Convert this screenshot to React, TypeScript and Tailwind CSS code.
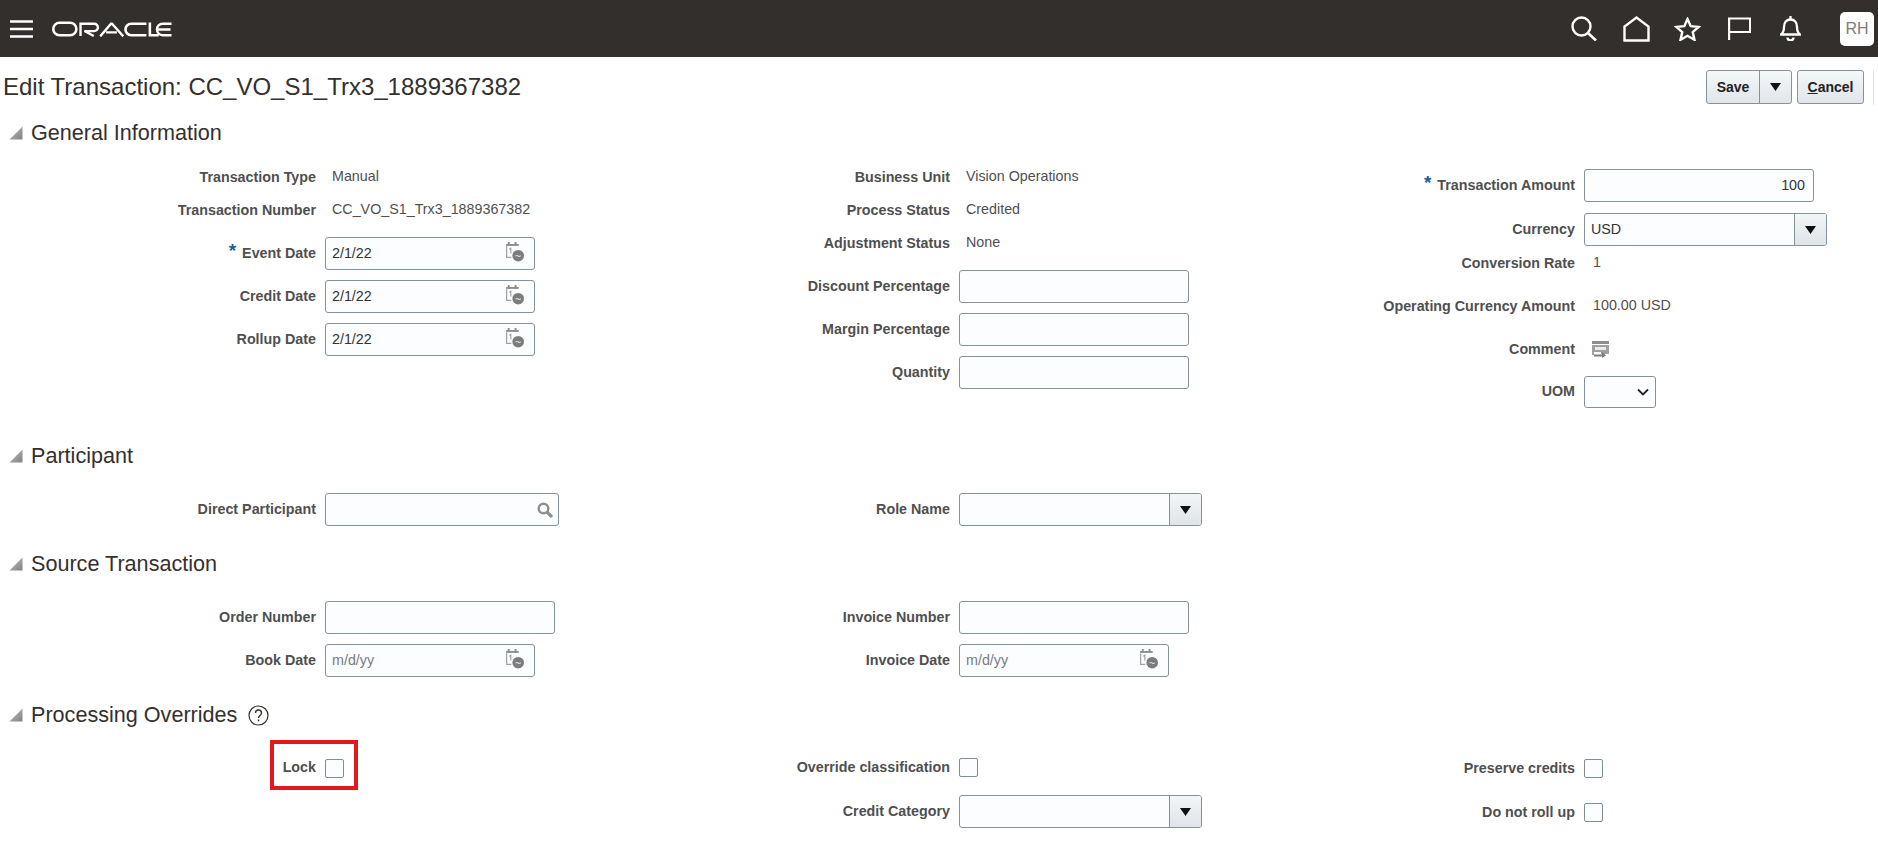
import React from 'react';

const font = "font-['Liberation_Sans',Arial,sans-serif]";

function CalendarIcon() {
  return (
    <svg width="19" height="20" viewBox="0 0 18 19" className="shrink-0 -mt-[3px]">
      <path d="M3.500 0v3.500M10 0v3.500" stroke="#8a8a8a" strokeWidth="1.800" />
      <path d="M1 2.800h12" stroke="#8f8f8f" strokeWidth="1.800" />
      <path d="M1.500 4v10.500H6" fill="none" stroke="#a3a3a3" strokeWidth="1.200" />
      <path d="M4 7l1.500-1v5" fill="none" stroke="#999" strokeWidth="1" />
      <circle cx="12.500" cy="13" r="5.500" fill="#7c7c7c" />
      <path d="M10 13.300q1.200-1 2.500 0t2.500-.4" fill="none" stroke="#dcdcdc" strokeWidth="1" />
    </svg>
  );
}

function DropTriangle() {
  return (
    <svg width="11" height="8" viewBox="0 0 11 8">
      <path d="M0 0h11L5.500 8z" fill="#111" />
    </svg>
  );
}

function Disclosure() {
  return (
    <svg width="14" height="14" viewBox="0 0 14 14" className="shrink-0">
      <defs>
        <linearGradient id="disc" x1="0" y1="0" x2="1" y2="1">
          <stop offset="0" stopColor="#c4c4c4" />
          <stop offset="1" stopColor="#808080" />
        </linearGradient>
      </defs>
      <path d="M13.500 .5v13H.5z" fill="url(#disc)" />
    </svg>
  );
}

function Label({ text, required }: { text: string; required?: boolean }) {
  return (
    <div className="w-[316px] shrink-0 flex justify-end items-center text-right text-[14.3px] font-bold text-[#4f4f4f] whitespace-nowrap">
      {required && <span className="text-[#1a5f9e] text-[19px] leading-none mr-[6px] -mt-[6px]">*</span>}
      {text}
    </div>
  );
}

// label + control row, the top margin gives the uneven spacing of the form
function Row({ label, required, className, children }: { label: string; required?: boolean; className?: string; children?: React.ReactNode }) {
  return (
    <div className={`flex items-center gap-[9px] h-[33px] ${className ?? ''}`}>
      <Label text={label} required={required} />
      {children}
    </div>
  );
}

function Value({ children }: { children: React.ReactNode }) {
  return <div className="pl-[7px] text-[14.3px] text-[#4f4f4f] whitespace-nowrap -mt-[1px]">{children}</div>;
}

function Input({ width, value, placeholder, right, children }: { width: string; value?: string; placeholder?: string; right?: boolean; children?: React.ReactNode }) {
  return (
    <div className={`${width} h-[33px] shrink-0 flex items-center pl-[6px] bg-[#fbfdfe] border border-[#84929c] rounded-[3px] text-[14.3px] text-[#333] ${right ? 'justify-end pr-[8px]' : 'justify-between pr-[10px]'}`}>
      {placeholder ? <span className="text-[#7b7b7b]">{placeholder}</span> : <span>{value}</span>}
      {children}
    </div>
  );
}

function DateInput({ value, placeholder }: { value?: string; placeholder?: string }) {
  return (
    <Input width="w-[210px]" value={value} placeholder={placeholder}>
      <CalendarIcon />
    </Input>
  );
}

function Combo({ value }: { value?: string }) {
  return (
    <div className="w-[243px] h-[33px] shrink-0 flex bg-[#fbfdfe] border border-[#84929c] rounded-[3px] overflow-hidden text-[14.3px] text-[#333]">
      <div className="flex-1 flex items-center pl-[6px]">{value}</div>
      <div className="w-[32px] flex items-center justify-center border-l border-[#84929c] bg-gradient-to-b from-[#f3f5f7] to-[#e0e4e8]">
        <DropTriangle />
      </div>
    </div>
  );
}

function Checkbox() {
  return <div className="w-[19px] h-[19px] shrink-0 bg-[#fbfdfe] border border-[#7f8d97] rounded-[2px]" />;
}

function Section({ title, className, children }: { title: string; className?: string; children?: React.ReactNode }) {
  return (
    <div className={`flex items-center gap-[4px] pl-[9px] h-[30px] text-[21.6px] text-[#33302d] ${className ?? ''}`}>
      <Disclosure />
      <span className="ml-[4px] whitespace-nowrap">{title}</span>
      {children}
    </div>
  );
}

function Grid({ children }: { children: React.ReactNode }) {
  return <div className="grid grid-cols-[634px_625px_1fr]">{children}</div>;
}

function Header() {
  return (
    <header className="h-[57px] bg-[#332f2c] flex items-center justify-between pl-[10px] pr-[4px]">
      <div className="flex items-center gap-[19px]">
        <svg width="23" height="18" viewBox="0 0 23 18">
          <path d="M0 1.500h23M0 9h23M0 16.500h23" stroke="#fff" strokeWidth="2.400" />
        </svg>
        {/* Oracle wordmark */}
        <svg width="120" height="16" viewBox="0 0 122 16" fill="none" stroke="#fff" strokeWidth="2.600">
          <rect x="1.300" y="1.700" width="23.500" height="12.600" rx="6.300" />
          <path d="M29 15V2.700h14a3.700 3.700 0 010 7.400H33l9.500 5" strokeWidth="2.400" />
          <path d="M49 15.500L60 2.700h1L72.500 15.500M55 11.500h11" strokeWidth="2.400" />
          <path d="M96 2.700H80.500a5.800 5.800 0 000 11.600H96" />
          <path d="M99.500 1.500v12.800h9" />
          <path d="M121.500 2.700H112.500a5.800 5.800 0 000 11.600h9M106 8.500h14.500" strokeWidth="2.400" />
        </svg>
      </div>
      <div className="flex items-center">
        <svg width="26" height="25" viewBox="0 0 26 25" fill="none" stroke="#fff" strokeWidth="2.400" className="mr-[26px]">
          <circle cx="10.500" cy="10.500" r="9" />
          <path d="M17 17l8 7.500" strokeWidth="2.600" />
        </svg>
        <svg width="27" height="26" viewBox="0 0 27 26" fill="none" stroke="#fff" strokeWidth="2.400" className="mr-[24px]">
          <path d="M1.500 24.500V10.500L13.500 1.500l12 9v14z" />
        </svg>
        <svg width="27" height="24" viewBox="0 0 27 24" fill="none" stroke="#fff" strokeWidth="2.400" className="mr-[27px]">
          <path d="M13.500 2l3.200 7.200 8 .7-6 5.200 1.800 7.700-7-4-7 4 1.800-7.700-6-5.200 8-.7z" />
        </svg>
        <svg width="23" height="23" viewBox="0 0 23 23" fill="none" stroke="#fff" strokeWidth="2.200" className="mr-[29px]">
          <path d="M1.100 23V1.500h21v13.500H1.100" />
        </svg>
        <svg width="21" height="25" viewBox="0 0 21 25" fill="none" stroke="#fff" strokeWidth="2.300" className="mr-[39px]">
          <path d="M1 18.500c2.500-2 3-3.500 3-7.500 0-4.500 2.500-7.500 6.500-7.500s6.500 3 6.500 7.500c0 4 .5 5.500 3 7.500z" />
          <path d="M10.500 0v3.500" />
          <path d="M7.500 21.500a3 2.800 0 006 0" />
        </svg>
        <div className="w-[34px] h-[34px] rounded-[5px] bg-white flex items-center justify-center text-[16px] text-[#7d7d7d]">RH</div>
      </div>
    </header>
  );
}

export default function App() {
  return (
    <div className={`${font} w-[1878px] h-[847px] bg-white overflow-hidden`}>
      <Header />

      <div className="flex items-center justify-between h-[48px] mt-[6px] pl-[3px] pr-[4px]">
        <h1 className="text-[24px] text-[#33302d] font-normal">Edit Transaction: CC_VO_S1_Trx3_1889367382</h1>
        <div className="flex items-center">
          <div className="flex h-[34px] w-[86px] border border-[#84929c] rounded-[3px] bg-gradient-to-b from-[#f5f7f8] to-[#e1e5e9] text-[14px] font-bold text-[#222]">
            <div className="w-[53px] flex items-center justify-center border-r border-[#84929c]">Save</div>
            <div className="flex-1 flex items-center justify-center"><DropTriangle /></div>
          </div>
          <div className="ml-[5px] flex items-center justify-center h-[34px] w-[67px] border border-[#84929c] rounded-[3px] bg-gradient-to-b from-[#f5f7f8] to-[#e1e5e9] text-[14px] font-bold text-[#222]">
            <span><span className="underline">C</span>ancel</span>
          </div>
          <div className="ml-[9px] w-px h-[35px] bg-[#e2e2e2]" />
        </div>
      </div>

      {/* General Information */}
      <Section title="General Information" className="mt-[7px]" />
      <Grid>
        <div className="mt-[13px]">
          <Row label="Transaction Type"><Value>Manual</Value></Row>
          <Row label="Transaction Number"><Value>CC_VO_S1_Trx3_1889367382</Value></Row>
          <Row label="Event Date" required className="mt-[10px]"><DateInput value="2/1/22" /></Row>
          <Row label="Credit Date" className="mt-[10px]"><DateInput value="2/1/22" /></Row>
          <Row label="Rollup Date" className="mt-[10px]"><DateInput value="2/1/22" /></Row>
        </div>
        <div className="mt-[13px]">
          <Row label="Business Unit"><Value>Vision Operations</Value></Row>
          <Row label="Process Status"><Value>Credited</Value></Row>
          <Row label="Adjustment Status"><Value>None</Value></Row>
          <Row label="Discount Percentage" className="mt-[10px]"><Input width="w-[230px]" /></Row>
          <Row label="Margin Percentage" className="mt-[10px]"><Input width="w-[230px]" /></Row>
          <Row label="Quantity" className="mt-[10px]"><Input width="w-[230px]" /></Row>
        </div>
        <div className="mt-[21px]">
          <Row label="Transaction Amount" required>
            <Input width="w-[230px]" value="100" right />
          </Row>
          <Row label="Currency" className="mt-[11px]"><Combo value="USD" /></Row>
          <Row label="Conversion Rate" className="mt-[1px]"><div className="ml-[2px]"><Value>1</Value></div></Row>
          <Row label="Operating Currency Amount" className="mt-[10px]"><div className="ml-[2px]"><Value>100.00 USD</Value></div></Row>
          <Row label="Comment" className="mt-[10px]">
            <div className="pl-[8px]">
              <svg width="18" height="17" viewBox="0 0 18 17">
                <path d="M0 0h17v3H0z" fill="#8d8d8d" />
                <path d="M0 4h17v9H9v-2H2v3H0z" fill="#a0a0a0" />
                <path d="M3 6h11v3H3z" fill="#ececec" />
                <path d="M2 13.500h8v-2.500l4 3.500-4 2.500v-1.500H2z" fill="#7c7c7c" />
              </svg>
            </div>
          </Row>
          <Row label="UOM" className="mt-[9px]">
            <div className="w-[72px] h-[32px] flex items-center justify-end pr-[6px] bg-[#fbfdfe] border border-[#84929c] rounded-[3px]">
              <svg width="12" height="8" viewBox="0 0 12 8" fill="none" stroke="#222" strokeWidth="1.800">
                <path d="M1 1.500l5 5 5-5" />
              </svg>
            </div>
          </Row>
        </div>
      </Grid>

      {/* Participant */}
      <Section title="Participant" className="mt-[33px]" />
      <Grid>
        <div className="mt-[22px]">
          <Row label="Direct Participant">
            <Input width="w-[234px]">
              <svg width="16" height="16" viewBox="0 0 16 16" fill="none" stroke="#8f8f8f" strokeWidth="2.400" className="-mr-[5px]">
                <circle cx="6.500" cy="6.500" r="4.800" />
                <path d="M10 10l5 5" strokeWidth="3.200" />
              </svg>
            </Input>
          </Row>
        </div>
        <div className="mt-[22px]">
          <Row label="Role Name"><Combo /></Row>
        </div>
        <div />
      </Grid>

      {/* Source Transaction */}
      <Section title="Source Transaction" className="mt-[23px]" />
      <Grid>
        <div className="mt-[22px]">
          <Row label="Order Number"><Input width="w-[230px]" /></Row>
          <Row label="Book Date" className="mt-[10px]"><DateInput placeholder="m/d/yy" /></Row>
        </div>
        <div className="mt-[22px]">
          <Row label="Invoice Number"><Input width="w-[230px]" /></Row>
          <Row label="Invoice Date" className="mt-[10px]"><DateInput placeholder="m/d/yy" /></Row>
        </div>
        <div />
      </Grid>

      {/* Processing Overrides */}
      <Section title="Processing Overrides" className="mt-[23px]">
        <svg width="21" height="21" viewBox="0 0 21 21" fill="none" stroke="#33302d" className="ml-[7px]">
          <circle cx="10.500" cy="10.500" r="9.500" strokeWidth="1.200" />
          <path d="M7.500 8c0-4 6-4 6 0 0 2.500-3 2.500-3 5" strokeWidth="1.400" />
          <path d="M10.500 14.500v1.800" strokeWidth="1.500" />
        </svg>
      </Section>
      <Grid>
        <div className="mt-[10px] pl-[270px]">
          <div className="w-[88px] h-[50px] pt-[6px] border-[4px] border-[#e0191f] flex items-center justify-end gap-[9px] pr-[10px] text-[14.3px] font-bold text-[#4f4f4f]">
            Lock
            <Checkbox />
          </div>
        </div>
        <div className="mt-[21px]">
          <Row label="Override classification"><Checkbox /></Row>
          <Row label="Credit Category" className="mt-[11px]"><Combo /></Row>
        </div>
        <div className="mt-[22px]">
          <Row label="Preserve credits"><Checkbox /></Row>
          <Row label="Do not roll up" className="mt-[11px]"><Checkbox /></Row>
        </div>
      </Grid>
    </div>
  );
}
